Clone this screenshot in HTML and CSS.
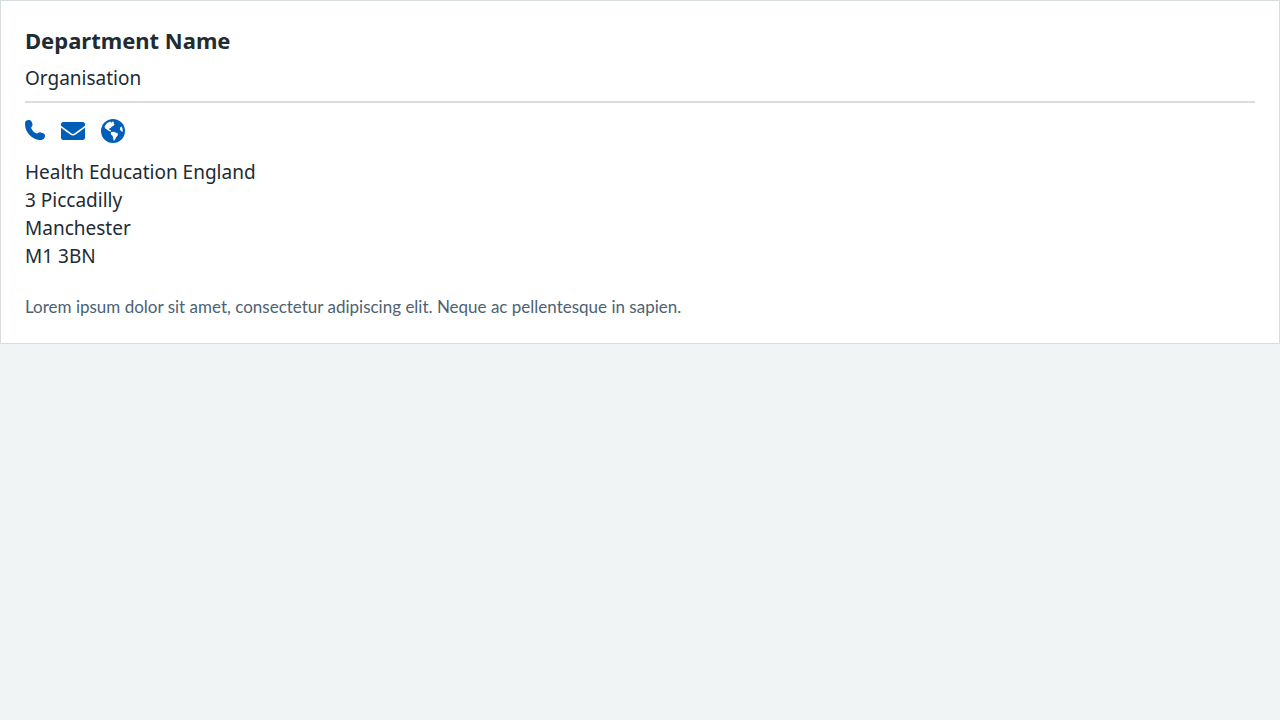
FILE: index.html
```html
<!DOCTYPE html>
<html lang="en">
<head>
<meta charset="utf-8">
<meta name="viewport" content="width=device-width, initial-scale=1">
<title>Department Name</title>
<link rel="stylesheet" href="styles.css">
</head>
<body>
<article class="card">
  <header class="card__header">
    <h1 class="card__title">Department Name</h1>
    <p class="card__organisation">Organisation</p>
  </header>
  <nav class="card__links" aria-label="Contact">
    <a class="card__link" href="#phone" aria-label="Phone">
      <svg width="20" height="24" viewBox="0 0 20 24" aria-hidden="true"><path d="M1.1 1.7C2.1 1.1 4 .8 5.2 1.2C6.3 1.6 6.6 2.6 7 3.7C7.4 4.9 7.9 5.8 7.3 6.7C6.7 7.6 6 8.2 6.3 9.2C7 11.2 9 13.4 11.2 14.3C12.4 14.7 13.1 13.8 14 13.4C15 13 16.1 13.5 17.3 13.9C18.7 14.4 19.7 14.8 19.9 15.9C20.2 17.2 19.8 18.9 18.9 19.7C17.7 20.8 16 21.1 14.3 20.9C7.2 20.2 .6 13.5 .1 6.4C-.1 4.5 .1 2.4 1.1 1.7Z"/></svg>
    </a>
    <a class="card__link" href="#email" aria-label="Email">
      <svg width="24" height="24" viewBox="0 0 512 512" aria-hidden="true"><path d="M502.3 190.8c3.9-3.1 9.7-.2 9.7 4.7V400c0 26.5-21.5 48-48 48H48c-26.5 0-48-21.5-48-48V195.6c0-5 5.7-7.8 9.7-4.7 22.4 17.4 52.1 39.5 154.1 113.6 21.1 15.4 56.7 47.8 92.2 47.6 35.7.3 72-32.8 92.3-47.6 102-74.1 131.6-96.3 154-113.7zM256 320c23.2.4 56.6-29.2 73.4-41.4 132.7-96.3 142.8-104.7 173.4-128.7 5.8-4.5 9.2-11.5 9.2-18.9v-19c0-26.5-21.5-48-48-48H48c-26.5 0-48 21.5-48 48v19c0 7.4 3.4 14.3 9.2 18.9 30.6 23.9 40.7 32.4 173.4 128.7 16.8 12.2 50.2 41.8 73.4 41.4z"/></svg>
    </a>
    <a class="card__link" href="#website" aria-label="Website">
      <svg width="24" height="24" viewBox="0 0 24 24" aria-hidden="true"><circle cx="12" cy="12" r="12"/><path class="card__land" d="M3.6 7.4L5.8 4.2L9.2 2.6L10.4 3.7L11.5 2.5L13.1 3L12.4 4.3L13.6 5.2L12.2 7.1L10.8 7.5L9.7 8.9L8.2 9.5L8.1 10.5L9.6 10.9L10.2 12.6L8.5 12.3L6.2 10.8L4 9.2Z"/><path class="card__land" d="M10 13.1L13 12.8L15.1 13.8L17.2 14.8L16.5 16.8L14.9 18.5L14.1 20.6L12.8 22L12.2 19.2L11.6 17.1L9.8 15.2Z"/><path class="card__land" d="M20.5 7.2L21.5 9.5L21.8 12.7L20.3 12.3L18.8 10.4L19.3 8.5Z"/></svg>
    </a>
  </nav>
  <address class="card__address">Health Education England<br>3 Piccadilly<br>Manchester<br>M1 3BN</address>
  <p class="card__description">Lorem ipsum dolor sit amet, consectetur adipiscing elit. Neque ac pellentesque in sapien.</p>
</article>
</body>
</html>
```
FILE: styles.css
```css
body {
  margin: 0;
  background: #f0f4f5;
  color: #212b32;
  font-family: "Noto Sans", Arial, sans-serif;
}

.card {
  padding: 24px;
  border: 1px solid #d8dde0;
  background: #fff;
}

.card__header {
  padding-bottom: 9px;
  border-bottom: 2px solid #d8dde0;
}

.card__title {
  margin: 0 0 9px;
  font-size: 22px;
  font-weight: 700;
  line-height: 30px;
}

.card__organisation {
  margin: 0;
  font-size: 19px;
  line-height: 28px;
}

.card__links {
  display: flex;
  gap: 16px;
  margin: 16px 0 15px;
}

.card__link {
  display: flex;
  color: #005eb8;
}

.card__link svg {
  fill: currentColor;
}

.card__link .card__land {
  fill: #fff;
}

.card__address {
  margin-bottom: 25px;
  font-size: 19px;
  font-style: normal;
  line-height: 28px;
}

.card__description {
  margin: 0;
  color: #4c6272;
  font-family: Lato, Arial, sans-serif;
  font-size: 17px;
  line-height: 24px;
}
```
